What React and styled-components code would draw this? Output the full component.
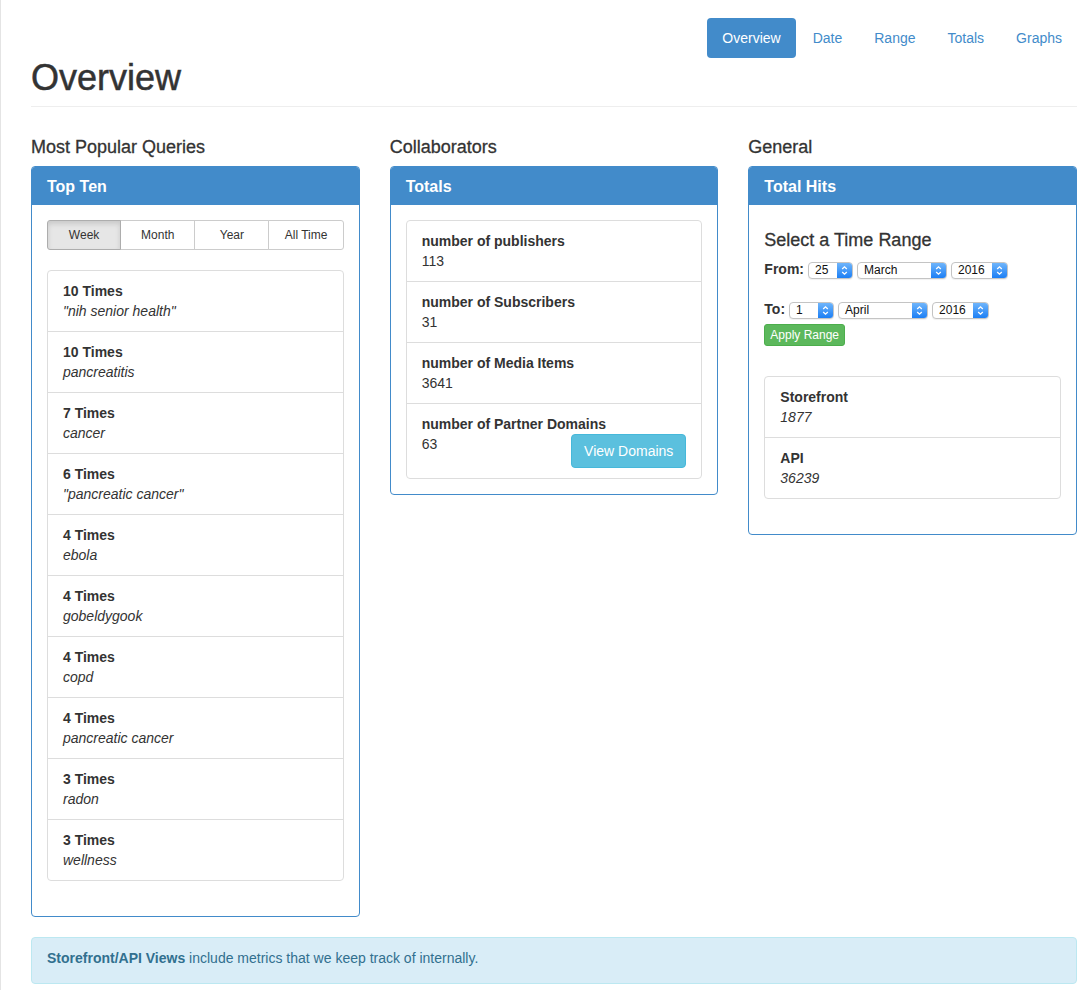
import React from "react";
import styled, { createGlobalStyle, css } from "styled-components";

const Global = createGlobalStyle`
  html, body { margin: 0; padding: 0; background: #fff; }
  body {
    border-left: 1px solid #e4e4e4;
    font-family: "Liberation Sans", Arial, sans-serif;
    font-size: 14px;
    line-height: 20px;
    color: #333;
    min-height: 990px;
    box-sizing: border-box;
  }
  * { box-sizing: border-box; }
`;

const PRIMARY = "#428bca";

const Container = styled.div`
  width: 1076px;
  padding-left: 30px;
  padding-top: 18px;
`;

const Nav = styled.ul`
  display: flex;
  justify-content: flex-end;
  list-style: none;
  margin: 0;
  padding: 0;
`;

const Pill = styled.li`
  margin-left: 2px;
  padding: 10px 15px;
  line-height: 20px;
  border-radius: 4px;
  color: ${(p) => (p.$active ? "#fff" : PRIMARY)};
  background: ${(p) => (p.$active ? PRIMARY : "transparent")};
`;

const PageHeader = styled.div`
  padding-bottom: 8px;
  border-bottom: 1px solid #eee;
  margin-bottom: 20px;
`;

const Title = styled.h1`
  margin: 0;
  font-size: 36px;
  line-height: 40px;
  font-weight: 500;
  color: #333;
  -webkit-text-stroke: 0.5px #333;
`;

const Row = styled.div`
  display: grid;
  grid-template-columns: repeat(3, 1fr);
  column-gap: 30px;
  align-items: start;
`;

const ColHeading = styled.h4`
  margin: 10px 0 9px;
  font-size: 18px;
  line-height: 20px;
  font-weight: 500;
  -webkit-text-stroke: 0.3px #333;
`;

const Panel = styled.div`
  border: 1px solid ${PRIMARY};
  border-radius: 4px;
  background: #fff;
  margin-bottom: 20px;
  overflow: hidden;
`;

const PanelHeading = styled.div`
  background: ${PRIMARY};
  color: #fff;
  padding: 11px 15px 9px;
  border-bottom: 1px solid ${PRIMARY};
  font-size: 16px;
  line-height: 17px;
  font-weight: 700;
`;

const PanelBody = styled.div`
  padding: 15px;
`;

const BtnGroup = styled.div`
  display: grid;
  grid-template-columns: repeat(4, 1fr);
  margin-bottom: 20px;
`;

const GroupBtn = styled.div`
  height: 30px;
  font-size: 12px;
  line-height: 18px;
  padding: 5px 10px;
  text-align: center;
  border: 1px solid #ccc;
  margin-left: -1px;
  background: #fff;
  color: #333;
  &:first-child { margin-left: 0; border-radius: 3px 0 0 3px; }
  &:last-child { border-radius: 0 3px 3px 0; }
  ${(p) =>
    p.$active &&
    css`
      background: #e6e6e6;
      border-color: #adadad;
      box-shadow: inset 0 3px 5px rgba(0, 0, 0, 0.125);
      position: relative;
    `}
`;

const ListGroup = styled.div`
  border: 1px solid #ddd;
  border-radius: 4px;
  margin-bottom: ${(p) => (p.$flush ? "0" : "20px")};
`;

const ListItem = styled.div`
  padding: 10px 15px;
  border-top: 1px solid #ddd;
  &:first-child { border-top: none; }
  &::after { content: ""; display: block; clear: both; }
`;

const ItemTitle = styled.div`
  font-weight: 700;
`;

const ItemText = styled.div`
  font-style: ${(p) => (p.$italic ? "italic" : "normal")};
`;

const InfoBtn = styled.span`
  float: right;
  display: inline-block;
  padding: 6px 12px;
  line-height: 20px;
  font-size: 14px;
  color: #fff;
  background: #5bc0de;
  border: 1px solid #46b8da;
  border-radius: 4px;
`;

const RangeHeading = styled.h4`
  margin: 10px 0 9px;
  font-size: 18px;
  line-height: 20px;
  font-weight: 500;
  -webkit-text-stroke: 0.3px #333;
`;

const FormLine = styled.div`
  display: flex;
  align-items: center;
  gap: 4px;
  height: 20px;
  margin-top: ${(p) => p.$mt || 0}px;
`;

const Label = styled.span`
  font-weight: 700;
`;

const SelectBox = styled.span`
  display: inline-flex;
  align-items: stretch;
  width: ${(p) => p.$w}px;
  height: 17px;
  margin-top: 2px;
  border: 1px solid #c4c4c4;
  border-radius: 4px;
  background: #fff;
  overflow: hidden;
  font-size: 12px;
  line-height: 15px;
  color: #111;
  box-shadow: 0 1px 1px rgba(0, 0, 0, 0.06);
`;

const SelectText = styled.span`
  flex: 1;
  padding-left: 6px;
`;

const SelectArrow = styled.span`
  width: 15px;
  display: flex;
  align-items: center;
  justify-content: center;
  background: linear-gradient(#6fb5fb, #1c7ff5);
`;

const Select = ({ w, value }) => (
  <SelectBox $w={w}>
    <SelectText>{value}</SelectText>
    <SelectArrow>
      <svg width="7" height="11" viewBox="0 0 7 11">
        <path d="M1.2 4 L3.5 1.8 L5.8 4 M1.2 7 L3.5 9.2 L5.8 7" fill="none" stroke="#fff" strokeWidth="1.3" />
      </svg>
    </SelectArrow>
  </SelectBox>
);

const SuccessBtn = styled.span`
  display: inline-block;
  margin-top: 5px;
  padding: 1px 5px;
  font-size: 12px;
  line-height: 18px;
  color: #fff;
  background: #5cb85c;
  border: 1px solid #4cae4c;
  border-radius: 3px;
`;

const Spacer = styled.div`
  height: ${(p) => p.$h}px;
`;

const Alert = styled.div`
  padding: 10px 15px 15px;
  background: #d9edf7;
  border: 1px solid #bce8f1;
  border-radius: 4px;
  color: #31708f;
`;

const queries = [
  ["10 Times", '"nih senior health"'],
  ["10 Times", "pancreatitis"],
  ["7 Times", "cancer"],
  ["6 Times", '"pancreatic cancer"'],
  ["4 Times", "ebola"],
  ["4 Times", "gobeldygook"],
  ["4 Times", "copd"],
  ["4 Times", "pancreatic cancer"],
  ["3 Times", "radon"],
  ["3 Times", "wellness"],
];

const totals = [
  ["number of publishers", "113"],
  ["number of Subscribers", "31"],
  ["number of Media Items", "3641"],
];

export default function App() {
  return (
    <>
      <Global />
      <Container>
        <Nav>
          <Pill $active>Overview</Pill>
          <Pill>Date</Pill>
          <Pill>Range</Pill>
          <Pill>Totals</Pill>
          <Pill>Graphs</Pill>
        </Nav>
        <PageHeader>
          <Title>Overview</Title>
        </PageHeader>
        <Row>
          <div>
            <ColHeading>Most Popular Queries</ColHeading>
            <Panel>
              <PanelHeading>Top Ten</PanelHeading>
              <PanelBody>
                <BtnGroup>
                  <GroupBtn $active>Week</GroupBtn>
                  <GroupBtn>Month</GroupBtn>
                  <GroupBtn>Year</GroupBtn>
                  <GroupBtn>All Time</GroupBtn>
                </BtnGroup>
                <ListGroup>
                  {queries.map(([t, q], i) => (
                    <ListItem key={i}>
                      <ItemTitle>{t}</ItemTitle>
                      <ItemText $italic>{q}</ItemText>
                    </ListItem>
                  ))}
                </ListGroup>
              </PanelBody>
            </Panel>
          </div>
          <div>
            <ColHeading>Collaborators</ColHeading>
            <Panel>
              <PanelHeading>Totals</PanelHeading>
              <PanelBody>
                <ListGroup $flush>
                  {totals.map(([t, v], i) => (
                    <ListItem key={i}>
                      <ItemTitle>{t}</ItemTitle>
                      <ItemText>{v}</ItemText>
                    </ListItem>
                  ))}
                  <ListItem>
                    <ItemTitle>number of Partner Domains</ItemTitle>
                    <InfoBtn>View Domains</InfoBtn>
                    <ItemText>63</ItemText>
                  </ListItem>
                </ListGroup>
              </PanelBody>
            </Panel>
          </div>
          <div>
            <ColHeading>General</ColHeading>
            <Panel>
              <PanelHeading>Total Hits</PanelHeading>
              <PanelBody>
                <RangeHeading>Select a Time Range</RangeHeading>
                <FormLine>
                  <Label>From:</Label>
                  <Select w={45} value="25" />
                  <Select w={90} value="March" />
                  <Select w={57} value="2016" />
                </FormLine>
                <FormLine $mt={20}>
                  <Label>To:</Label>
                  <Select w={45} value="1" />
                  <Select w={90} value="April" />
                  <Select w={57} value="2016" />
                </FormLine>
                <SuccessBtn>Apply Range</SuccessBtn>
                <Spacer $h={30} />
                <ListGroup>
                  <ListItem>
                    <ItemTitle>Storefront</ItemTitle>
                    <ItemText $italic>1877</ItemText>
                  </ListItem>
                  <ListItem>
                    <ItemTitle>API</ItemTitle>
                    <ItemText $italic>36239</ItemText>
                  </ListItem>
                </ListGroup>
              </PanelBody>
            </Panel>
          </div>
        </Row>
        <Alert>
          <b>Storefront/API Views</b> include metrics that we keep track of internally.
        </Alert>
      </Container>
    </>
  );
}
